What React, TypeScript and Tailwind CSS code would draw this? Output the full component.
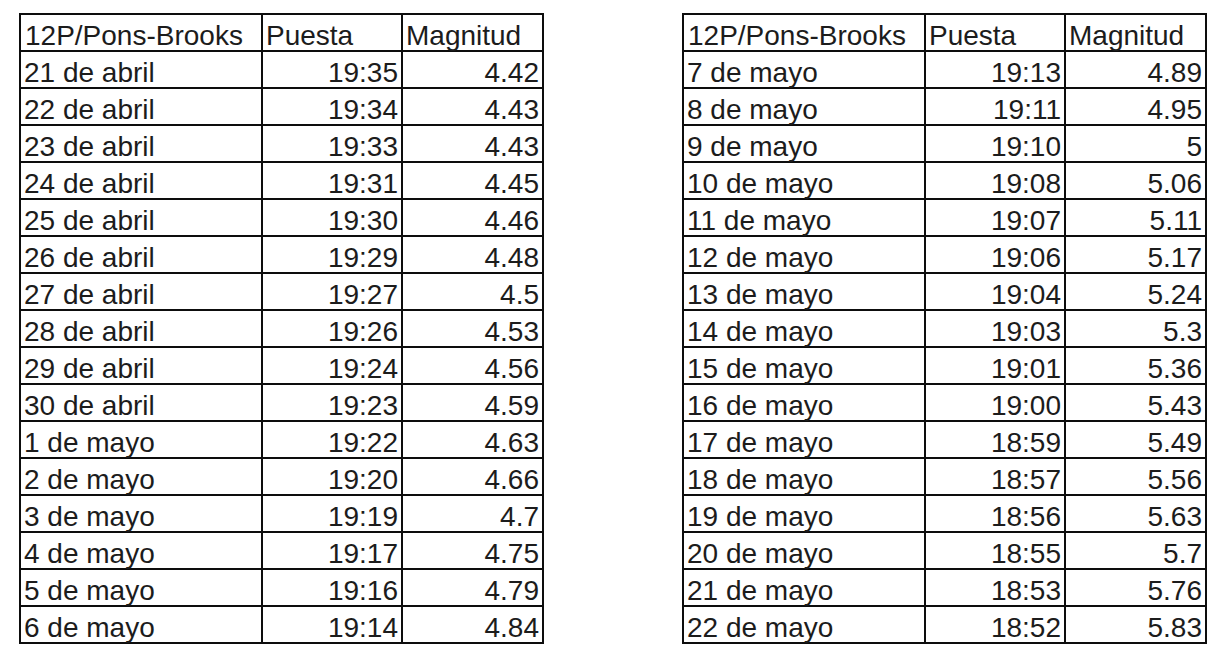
import React from 'react';

type Row = [string, string, string];

const left: Row[] = [
  ['21 de abril', '19:35', '4.42'],
  ['22 de abril', '19:34', '4.43'],
  ['23 de abril', '19:33', '4.43'],
  ['24 de abril', '19:31', '4.45'],
  ['25 de abril', '19:30', '4.46'],
  ['26 de abril', '19:29', '4.48'],
  ['27 de abril', '19:27', '4.5'],
  ['28 de abril', '19:26', '4.53'],
  ['29 de abril', '19:24', '4.56'],
  ['30 de abril', '19:23', '4.59'],
  ['1 de mayo', '19:22', '4.63'],
  ['2 de mayo', '19:20', '4.66'],
  ['3 de mayo', '19:19', '4.7'],
  ['4 de mayo', '19:17', '4.75'],
  ['5 de mayo', '19:16', '4.79'],
  ['6 de mayo', '19:14', '4.84'],
];

const right: Row[] = [
  ['7 de mayo', '19:13', '4.89'],
  ['8 de mayo', '19:11', '4.95'],
  ['9 de mayo', '19:10', '5'],
  ['10 de mayo', '19:08', '5.06'],
  ['11 de mayo', '19:07', '5.11'],
  ['12 de mayo', '19:06', '5.17'],
  ['13 de mayo', '19:04', '5.24'],
  ['14 de mayo', '19:03', '5.3'],
  ['15 de mayo', '19:01', '5.36'],
  ['16 de mayo', '19:00', '5.43'],
  ['17 de mayo', '18:59', '5.49'],
  ['18 de mayo', '18:57', '5.56'],
  ['19 de mayo', '18:56', '5.63'],
  ['20 de mayo', '18:55', '5.7'],
  ['21 de mayo', '18:53', '5.76'],
  ['22 de mayo', '18:52', '5.83'],
];

const cell = 'border-2 border-[#0d0d0d] h-[37px] p-0 align-bottom leading-[28px] whitespace-nowrap';

const CometTable: React.FC<{ rows: Row[] }> = ({ rows }) => (
  <table className="table-fixed border-collapse w-[523px] shrink-0">
    <colgroup>
      <col className="w-[242px]" />
      <col className="w-[140px]" />
      <col className="w-[141px]" />
    </colgroup>
    <tbody>
      <tr>
        <td className={`${cell} pl-[4px] text-left`}>12P/Pons-Brooks</td>
        <td className={`${cell} pl-[3px] text-left`}>Puesta</td>
        <td className={`${cell} pl-[3px] text-left`}>Magnitud</td>
      </tr>
      {rows.map(([date, time, mag]) => (
        <tr key={date}>
          <td className={`${cell} pl-[3px] text-left`}>{date}</td>
          <td className={`${cell} pr-[3px] text-right`}>{time}</td>
          <td className={`${cell} pr-[3px] text-right`}>{mag}</td>
        </tr>
      ))}
    </tbody>
  </table>
);

export default function App() {
  return (
    <div className="w-[1224px] h-[671px] bg-white overflow-hidden text-[#1c1c1c] text-[28px] font-['Liberation_Sans',Arial,sans-serif]">
      <div className="flex gap-[138px] pl-[19px] pt-[13px]">
        <CometTable rows={left} />
        <CometTable rows={right} />
      </div>
    </div>
  );
}
